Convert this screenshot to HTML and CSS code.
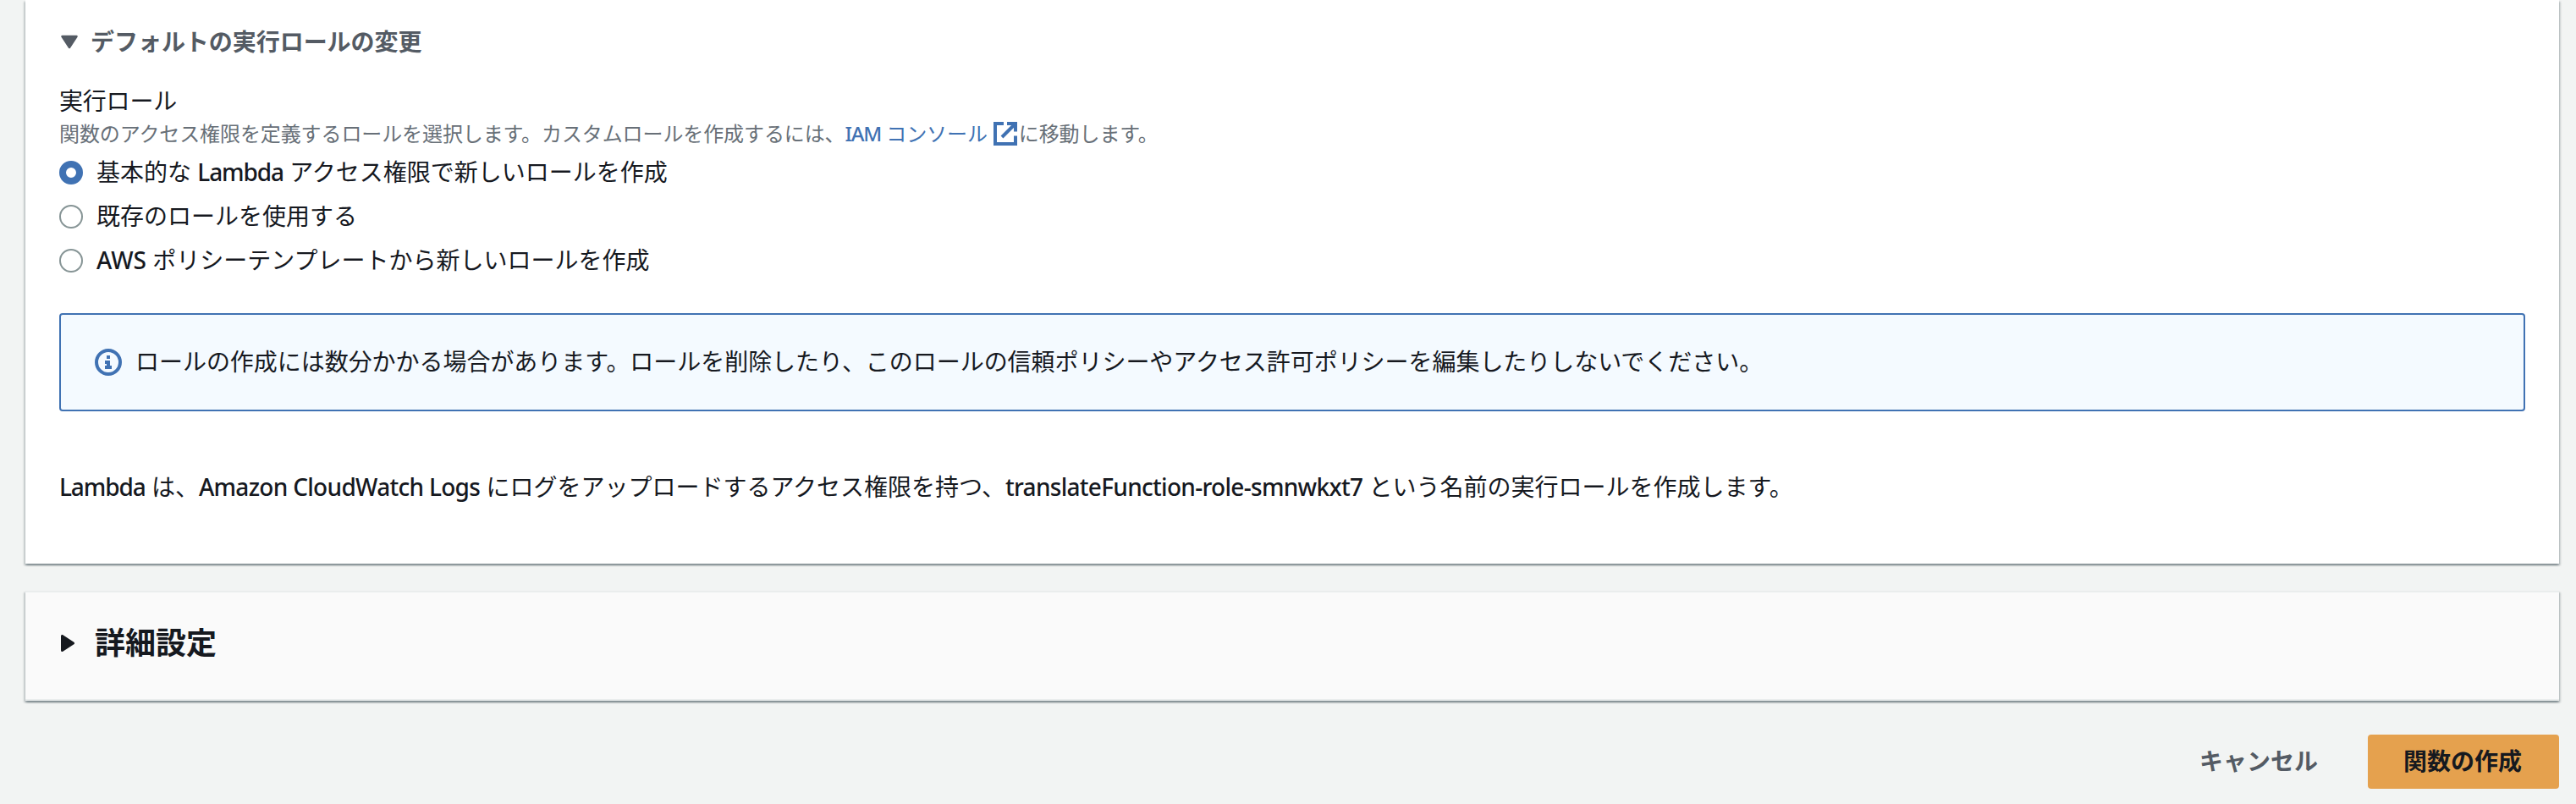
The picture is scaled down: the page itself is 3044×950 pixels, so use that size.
FILE: index.html
```html
<!DOCTYPE html>
<html lang="ja">
<head>
<meta charset="utf-8">
<title>関数の作成</title>
<link rel="stylesheet" href="styles.css">
</head>
<body>
<main class="page">
  <section class="panel panel-role">
    <h3 class="expander">
      <svg class="expander-icon" viewBox="0 0 20 17"><path d="M1.500 2H18.500L10 15Z" fill="currentColor" stroke="currentColor" stroke-width="2.5" stroke-linejoin="round"/></svg>
      <span>デフォルトの実行ロールの変更</span>
    </h3>
    <div class="label">実行ロール</div>
    <p class="description"><span>関数のアクセス権限を定義するロールを選択します。カスタムロールを作成するには、</span><a class="link"><span class="latin-iam">IAM</span> コンソール<svg class="external" viewBox="0 0 28 28"><path d="M12 2H2V26H26V16.500M16 2H26V11.500M10 18L25 3" fill="none" stroke="currentColor" stroke-width="4"/></svg></a><span>に移動します。</span></p>
    <div class="radios">
      <label class="radio"><span class="dot dot-on"></span><span class="radio-text">基本的な <span class="latin latin-name">Lambda</span> アクセス権限で新しいロールを作成</span></label>
      <label class="radio"><span class="dot"></span><span class="radio-text">既存のロールを使用する</span></label>
      <label class="radio"><span class="dot"></span><span class="radio-text"><span class="latin-aws">AWS</span> ポリシーテンプレートから新しいロールを作成</span></label>
    </div>
    <div class="alert">
      <svg class="info" viewBox="0 0 32 32"><circle cx="16" cy="16" r="14" fill="none" stroke="currentColor" stroke-width="4"/><path d="M14 8h4v4h-4zM12 14h6v6h2v4h-8v-4h2v-2h-2z" fill="currentColor"/></svg>
      <span class="alert-text">ロールの作成には数分かかる場合があります。ロールを削除したり、このロールの信頼ポリシーやアクセス許可ポリシーを編集したりしないでください。</span>
    </div>
    <p class="summary"><span class="latin latin-name">Lambda</span> は、<span class="latin">Amazon CloudWatch Logs</span> にログをアップロードするアクセス権限を持つ、<span class="latin">translateFunction-role-smnwkxt7</span> という名前の実行ロールを作成します。</p>
  </section>
  <section class="panel panel-advanced">
    <svg class="advanced-icon" viewBox="0 0 16 20"><path d="M1.500 1.500V18.500L14.500 10Z" fill="currentColor" stroke="currentColor" stroke-width="3" stroke-linejoin="round"/></svg>
    <h2 class="advanced-title">詳細設定</h2>
  </section>
  <footer class="actions">
    <button class="button button-link">キャンセル</button>
    <button class="button button-primary">関数の作成</button>
  </footer>
</main>
</body>
</html>
```
FILE: styles.css
```css
* { box-sizing: border-box; }
body {
  margin: 0;
  background: #f2f4f3;
  color: #16191f;
  font-family: "Noto Sans", "Noto Sans CJK JP", sans-serif;
  font-size: 28px;
  line-height: 44px;
}
h2, h3, p { margin: 0; }
.page {
  display: flex;
  flex-direction: column;
  height: 950px;
  padding: 0 20px 0 30px;
  overflow: hidden;
}
.panel {
  background: #fff;
  box-shadow: 0 2px 2px rgba(0, 28, 36, .3), 2px 2px 2px rgba(0, 28, 36, .15), -2px 2px 2px rgba(0, 28, 36, .15);
  white-space: nowrap;
}
.panel-role { height: 666px; padding: 27px 40px 0; }
.expander {
  display: flex;
  align-items: center;
  gap: 15px;
  font-size: 28px;
  font-weight: 700;
  letter-spacing: -.04px;
  color: #545b64;
}
.expander-icon { width: 20px; height: 17px; margin-left: 2px; }
.label { margin-top: 26px; letter-spacing: -.2px; }
.description {
  display: flex;
  height: 36px;
  font-size: 24px;
  line-height: 36px;
  letter-spacing: -.1px;
  color: #687078;
  margin-top: -1px;
}
.link { display: flex; align-items: center; white-space: pre; color: #4072b3; }
.external { width: 28px; height: 28px; margin: 0 2px 0 7px; }
.radios { display: grid; gap: 8px; margin-top: 6px; }
.radio { display: flex; align-items: center; gap: 16px; height: 44px; }
.radio-text { padding-bottom: 2px; }
.dot { width: 28px; height: 28px; border: 2px solid #879596; border-radius: 50%; }
.dot-on { border: 8px solid #4072b3; }
.latin { font-weight: 500; letter-spacing: -.7px; }
.latin-name { letter-spacing: -1.1px; }
.latin-aws { font-weight: 500; }
.latin-iam { font-weight: 500; letter-spacing: -1.2px; }
.alert {
  display: flex;
  align-items: center;
  gap: 16px;
  height: 116px;
  margin-top: 40px;
  padding: 0 40px;
  border: 2px solid #4072b3;
  border-radius: 4px;
  background: #f4faff;
}
.alert-text { padding-bottom: 2px; letter-spacing: -.04px; }
.info { width: 32px; height: 32px; color: #4072b3; }
.summary { margin-top: 67px; }
.panel-advanced {
  display: flex;
  align-items: center;
  gap: 24px;
  height: 130px;
  margin-top: 32px;
  padding: 0 42px 6px;
  border-top: 2px solid #eaeded;
  border-bottom: 2px solid #eaeded;
  background: #fafafa;
}
.advanced-icon { width: 16px; height: 20px; }
.advanced-title { font-size: 36px; font-weight: 700; }
.actions { display: flex; justify-content: flex-end; margin-top: 40px; }
.button {
  height: 64px;
  padding: 0 42px 2px;
  border: 0;
  border-radius: 4px;
  background: none;
  font: 700 28px/40px "Noto Sans", "Noto Sans CJK JP", sans-serif;
}
.button-link { margin-right: 17px; color: #545b64; }
.button-primary { width: 226px; padding-right: 44px; background: #e5a14e; color: #16191f; }
```
